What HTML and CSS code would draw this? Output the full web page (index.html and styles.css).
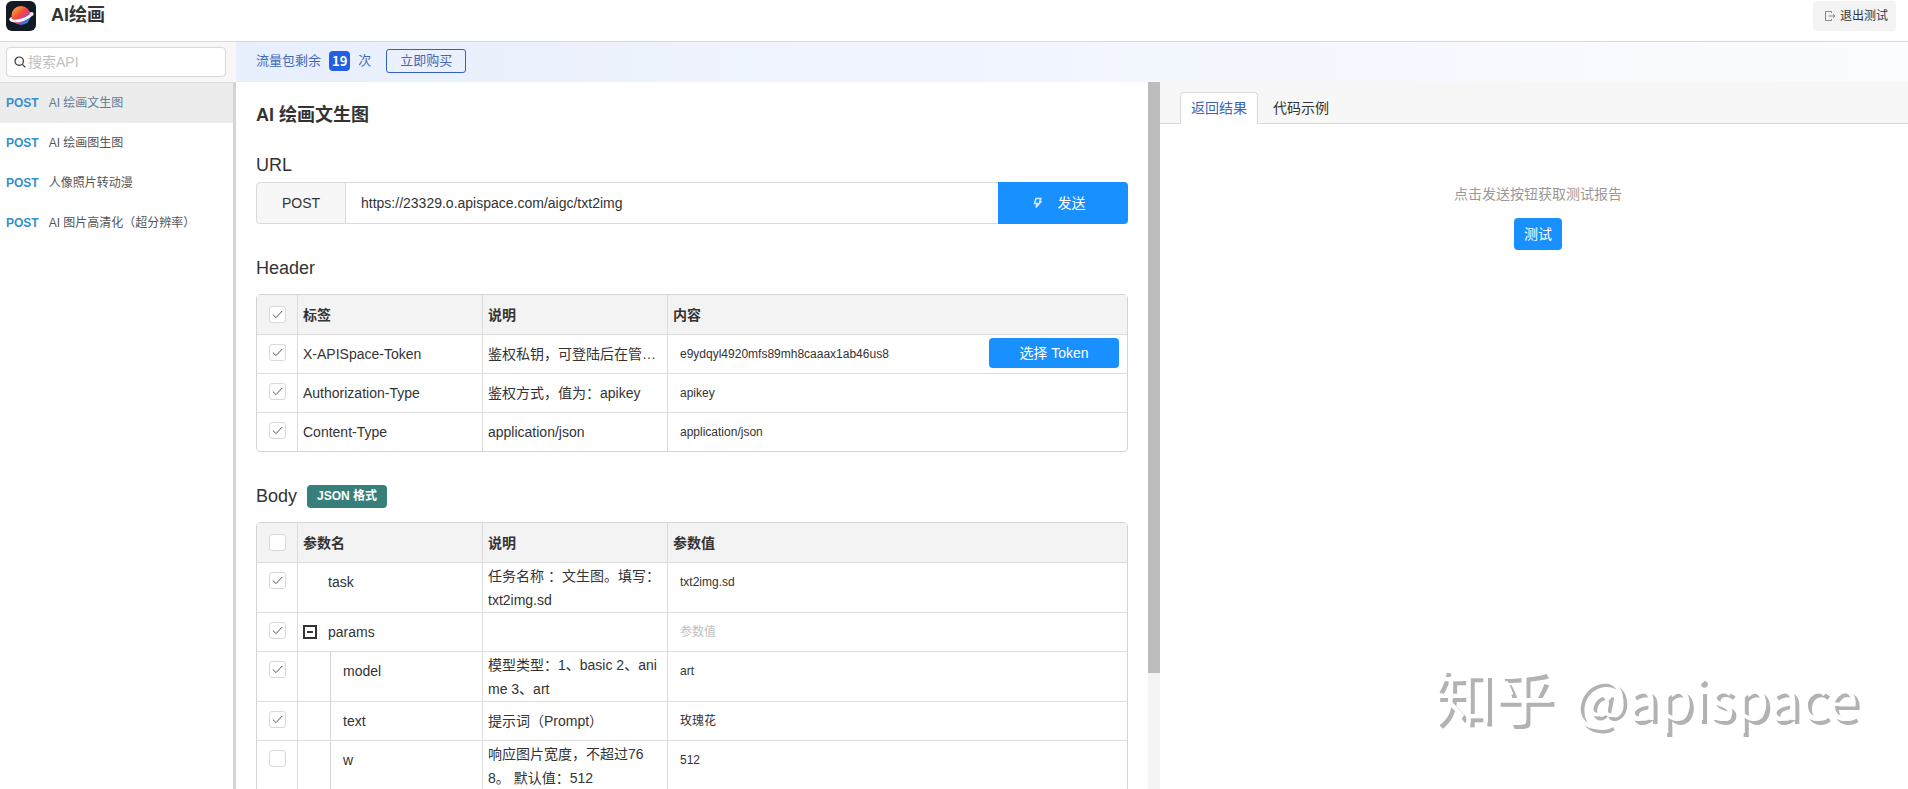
FILE: index.html
```html
<!DOCTYPE html>
<html lang="zh-CN">
<head>
<meta charset="utf-8">
<title>AI绘画</title>
<link rel="stylesheet" href="styles.css">
</head>
<body>
<header class="topbar">
  <svg class="logo" viewBox="0 0 30 30" aria-hidden="true">
    <defs>
      <linearGradient id="planet" x1="0.1" y1="0.2" x2="0.8" y2="1">
        <stop offset="0" stop-color="#ff9a2e"/>
        <stop offset="0.4" stop-color="#f2453f"/>
        <stop offset="0.62" stop-color="#c94a9a"/>
        <stop offset="0.85" stop-color="#3a6fe0"/>
        <stop offset="1" stop-color="#2fb4d8"/>
      </linearGradient>
    </defs>
    <rect width="30" height="30" rx="6" fill="#121a26"/>
    <circle cx="15" cy="14.5" r="9.5" fill="url(#planet)"/>
    <path d="M24.5 12.5C28 11 27.500 14 24.500 16.200C19 20.500 10 22.800 4.800 20.400C2.400 19 3 16.400 6 16C5 18 6.500 18.800 9 18.600C15 18.400 22 15.600 24.500 12.500Z" fill="#fff"/>
    <circle cx="25.600" cy="13" r="2" fill="#ffe3e8"/>
  </svg>
  <h1 class="app-name">AI绘画</h1>
  <button class="exit" type="button">
    <svg width="12" height="12" viewBox="0 0 12 12" fill="none" stroke="#888" aria-hidden="true"><path d="M7.500 3V1.500H1.500V10.500H7.500V9M4.500 6H11M9 4.200L11 6L9 7.800"/></svg>
    退出测试
  </button>
</header>
<div class="shell">
  <aside class="sidebar">
    <div class="search-row">
      <label class="search">
        <svg width="12" height="12" viewBox="0 0 12 12" fill="none" stroke="#333" stroke-width="1.200" aria-hidden="true"><circle cx="5.200" cy="5.200" r="4.200"/><path d="M8.300 8.300L11.300 11.300"/></svg>
        <input type="text" placeholder="搜索API" aria-label="搜索API">
      </label>
    </div>
    <nav class="api-list">
      <a class="api active" href="#"><span class="verb">POST</span>AI 绘画文生图</a>
      <a class="api" href="#"><span class="verb">POST</span>AI 绘画图生图</a>
      <a class="api" href="#"><span class="verb">POST</span>人像照片转动漫</a>
      <a class="api" href="#"><span class="verb">POST</span>AI 图片高清化（超分辨率）</a>
    </nav>
  </aside>
  <div class="workspace">
    <div class="quota">
      <span>流量包剩余</span><b class="count">19</b><span>次</span>
      <button class="buy" type="button">立即购买</button>
    </div>
    <div class="panes">
      <main class="request">
        <h2 class="title">AI 绘画文生图</h2>
        <h3 class="section">URL</h3>
        <div class="url-row">
          <span class="method">POST</span>
          <input class="url" type="text" value="https://23329.o.apispace.com/aigc/txt2img" aria-label="URL">
          <button class="send" type="button">
            <svg width="9" height="12" viewBox="0 0 9 12" fill="none" stroke="#d6eaff" stroke-width="1.500" aria-hidden="true"><path d="M3 1.500H7.800L6.700 4.800H7.800L3 10.500L4.200 6.500H1.500Z"/></svg>
            发送
          </button>
        </div>
        <h3 class="section spaced">Header</h3>
        <table class="grid">
          <colgroup><col class="c-check"><col class="c-name"><col class="c-desc"><col></colgroup>
          <thead><tr><th><input type="checkbox" checked aria-label="全选"></th><th>标签</th><th>说明</th><th>内容</th></tr></thead>
          <tbody>
            <tr><td><input type="checkbox" checked aria-label="X-APISpace-Token"></td><td>X-APISpace-Token</td><td>鉴权私钥，可登陆后在管…</td><td class="val"><div class="token-cell"><input type="text" value="e9ydqyl4920mfs89mh8caaax1ab46us8" aria-label="Token"><button class="token" type="button">选择 Token</button></div></td></tr>
            <tr><td><input type="checkbox" checked aria-label="Authorization-Type"></td><td>Authorization-Type</td><td>鉴权方式，值为：apikey</td><td class="val"><input type="text" value="apikey" aria-label="Authorization-Type 内容"></td></tr>
            <tr><td><input type="checkbox" checked aria-label="Content-Type"></td><td>Content-Type</td><td>application/json</td><td class="val"><input type="text" value="application/json" aria-label="Content-Type 内容"></td></tr>
          </tbody>
        </table>
        <h3 class="section spaced">Body <span class="format">JSON 格式</span></h3>
        <table class="grid">
          <colgroup><col class="c-check"><col class="c-name"><col class="c-desc"><col></colgroup>
          <thead><tr><th><input type="checkbox" aria-label="全选"></th><th>参数名</th><th>说明</th><th>参数值</th></tr></thead>
          <tbody>
            <tr class="tall"><td><input type="checkbox" checked aria-label="task"></td><td><div class="node">task</div></td><td>任务名称 ：文生图。填写：txt2img.sd</td><td class="val"><input type="text" value="txt2img.sd" aria-label="task 参数值"></td></tr>
            <tr><td><input type="checkbox" checked aria-label="params"></td><td><div class="node"><button class="fold" type="button" aria-label="收起"></button>params</div></td><td></td><td class="val"><input type="text" placeholder="参数值" aria-label="params 参数值"></td></tr>
            <tr class="tall"><td><input type="checkbox" checked aria-label="model"></td><td class="child"><div class="leaf">model</div></td><td>模型类型：1、basic 2、anime 3、art</td><td class="val"><input type="text" value="art" aria-label="model 参数值"></td></tr>
            <tr><td><input type="checkbox" checked aria-label="text"></td><td class="child"><div class="leaf">text</div></td><td>提示词（Prompt）</td><td class="val"><input type="text" value="玫瑰花" aria-label="text 参数值"></td></tr>
            <tr class="tall"><td><input type="checkbox" aria-label="w"></td><td class="child"><div class="leaf">w</div></td><td>响应图片宽度，不超过768。 默认值：512</td><td class="val"><input type="text" value="512" aria-label="w 参数值"></td></tr>
          </tbody>
        </table>
      </main>
      <div class="track"><div class="thumb"></div></div>
      <section class="response">
        <div class="tabs" role="tablist">
          <button class="tab on" type="button" role="tab" aria-selected="true">返回结果</button>
          <button class="tab" type="button" role="tab" aria-selected="false">代码示例</button>
        </div>
        <div class="empty">
          <p class="hint">点击发送按钮获取测试报告</p>
          <button class="test" type="button">测试</button>
        </div>
      </section>
    </div>
  </div>
</div>
<div class="watermark"><span class="site">知乎</span><span>@apispace</span></div>
</body>
</html>
```

FILE: styles.css
```css
* { box-sizing: border-box; }
body {
  margin: 0;
  height: 100vh;
  display: flex;
  flex-direction: column;
  overflow: hidden;
  position: relative;
  background: #fff;
  color: #333;
  font: 14px/24px "Liberation Sans", "Noto Sans CJK SC", sans-serif;
}
button, input { font: inherit; color: inherit; margin: 0; }
button { border: 0; padding: 0; cursor: pointer; }
h1, h2, h3, p { margin: 0; }

.topbar {
  flex: none;
  display: flex;
  align-items: flex-start;
  height: 42px;
  padding: 1px 12px 0 6px;
  border-bottom: 1px solid #d9d9d9;
}
.logo { width: 30px; height: 30px; }
.app-name { margin-left: 15px; font-size: 18px; line-height: 28px; font-weight: 700; }
.exit {
  margin-left: auto;
  display: flex;
  align-items: center;
  gap: 4px;
  height: 30px;
  padding: 0 8px 0 11px;
  border-radius: 4px;
  background: #f3f3f3;
  font-size: 12px;
}

.shell { flex: 1; min-height: 0; display: flex; }
.sidebar { flex: none; width: 236px; display: flex; flex-direction: column; }
.search-row { padding: 5px 10px 5px 6px; background: #f7f7f7; border-bottom: 1px solid #d9d9d9; }
.search {
  display: flex;
  align-items: center;
  gap: 2px;
  height: 30px;
  padding: 0 7px;
  border: 1px solid #d9d9d9;
  border-radius: 4px;
  background: #fff;
}
.search svg { flex: none; }
.search input { flex: 1; min-width: 0; border: 0; padding: 0; outline: 0; background: none; }
::placeholder { color: #bfbfbf; opacity: 1; }
.api-list { flex: 1; border-right: 3px solid #d4d4d4; }
.api {
  display: flex;
  align-items: center;
  gap: 10px;
  height: 40px;
  padding-left: 6px;
  color: #555;
  font-size: 12px;
  text-decoration: none;
}
.api.active { background: #ececec; color: #5f7d95; }
.verb { color: #3490d0; font-weight: 700; }

.workspace { flex: 1; min-width: 0; display: flex; flex-direction: column; }
.quota {
  flex: none;
  display: flex;
  align-items: center;
  gap: 8px;
  height: 40px;
  padding: 0 20px 2px;
  background: linear-gradient(90deg, #e8effc, #fbfcff);
  color: #4468b8;
  font-size: 13px;
}
.count {
  height: 20px;
  padding: 0 3px;
  border-radius: 4px;
  background: #235fe3;
  color: #fff;
  font: 700 13px/20px "Noto Sans CJK SC", sans-serif;
}
.buy {
  width: 80px;
  height: 24px;
  margin-left: 7px;
  border: 1px solid #3560bd;
  border-radius: 3px;
  background: none;
  line-height: 22px;
}
.panes {
  flex: 1;
  min-height: 0;
  display: grid;
  grid-template-columns: minmax(0, 912fr) 12px minmax(0, 748fr);
  grid-template-rows: minmax(0, 1fr);
}

.request { padding: 20px; overflow: hidden; }
.title { font-size: 18px; line-height: 26px; font-weight: 700; }
.section {
  display: flex;
  align-items: center;
  gap: 10px;
  margin: 24px 0 4px;
  font-size: 18px;
  line-height: 26px;
  font-weight: 400;
}
.section.spaced { margin: 31px 0 13px; }
.url-row { display: flex; height: 42px; }
.method {
  width: 90px;
  border: 1px solid #d9d9d9;
  border-radius: 4px 0 0 4px;
  background: #f7f7f7;
  text-align: center;
  line-height: 40px;
}
.url {
  flex: 1;
  min-width: 0;
  padding: 0 15px;
  border: 1px solid #d9d9d9;
  border-width: 1px 0;
  outline: 0;
}
.send {
  width: 130px;
  display: flex;
  align-items: center;
  justify-content: center;
  gap: 16px;
  padding-right: 8px;
  border-radius: 0 4px 4px 0;
  background: #1890ff;
  color: #fff;
}
.format {
  height: 23px;
  padding: 0 10px;
  border-radius: 4px;
  background: #367f7b;
  color: #fff;
  font-size: 12px;
  line-height: 23px;
  font-weight: 700;
}

.grid {
  width: 100%;
  table-layout: fixed;
  border: 1px solid #d4d4d4;
  border-radius: 4px;
  border-collapse: separate;
  border-spacing: 0;
}
.c-check { width: 41px; }
.c-name, .c-desc { width: 185px; }
.grid th, .grid td {
  height: 39px;
  padding: 0 5px;
  border: 0 solid #dcdcdc;
  border-width: 0 1px 1px 0;
  text-align: left;
  word-break: break-all;
}
.grid th { height: 40px; background: #f3f3f3; }
.grid th:last-child, .grid td:last-child { border-right: 0; }
.grid tbody tr:last-child td { height: 38px; border-bottom: 0; }
.grid .tall td, .grid tbody .tall:last-child td { height: 50px; }
.grid th:first-child, .grid td:first-child { padding: 0; text-align: center; }
.grid td:first-child { vertical-align: top; padding-top: 9px; }
.grid td.val { padding: 7px 8px 0 12px; vertical-align: top; font-size: 12px; }
.val input { width: 100%; height: 24px; padding: 0; border: 0; outline: 0; background: none; }
.token-cell { display: flex; gap: 12px; margin-top: -4px; }
.token-cell input { flex: 1; min-width: 0; height: 32px; }
.token {
  flex: none;
  width: 130px;
  height: 30px;
  border-radius: 4px;
  background: #1890ff;
  color: #fff;
  font-size: 14px;
}
input[type="checkbox"] {
  appearance: none;
  display: block;
  width: 17px;
  height: 17px;
  margin: 0 auto;
  border: 1px solid #d9d9d9;
  border-radius: 3px;
  background: #fff center / 11px 9px no-repeat;
}
input[type="checkbox"]:checked {
  background-image: url("data:image/svg+xml,%3Csvg xmlns='http://www.w3.org/2000/svg' viewBox='0 0 11 9'%3E%3Cpath d='M.8 4.500L4 7.600L10.200 1' fill='none' stroke='%23555'/%3E%3C/svg%3E");
}
.node { display: flex; align-items: center; padding-left: 25px; }
.fold {
  width: 14px;
  height: 14px;
  margin: 0 11px 0 -25px;
  border: 2px solid #333;
  background: linear-gradient(#333, #333) center / 6px 2px no-repeat;
}
.grid td.child { padding-left: 32px; }
.leaf {
  display: flex;
  align-items: center;
  height: 38px;
  padding-left: 12px;
  border-left: 1px solid #d4d4d4;
}
.tall .leaf { height: 49px; padding-bottom: 12px; }
.tall .node { padding-bottom: 12px; }

.track { background: #f4f4f4; }
.thumb { height: 83.6%; background: #bcbcbc; }

.tabs {
  display: flex;
  align-items: flex-end;
  height: 42px;
  padding-left: 20px;
  background: #f7f7f7;
  box-shadow: inset 0 -1px #d9d9d9;
}
.tab {
  height: 32px;
  padding: 0 10px 2px;
  border: 1px solid transparent;
  border-bottom: 0;
  border-radius: 4px 4px 0 0;
  background: none;
}
.tab + .tab { margin-left: 4px; }
.tab.on { border-color: #d9d9d9; background: #fff; color: #3c66b5; }
.empty { display: flex; flex-direction: column; align-items: center; gap: 12px; padding: 58px 0 0 8px; }
.hint { color: #999; }
.test { width: 48px; height: 32px; border-radius: 4px; background: #1890ff; color: #fff; }

.watermark {
  position: absolute;
  right: 50px;
  bottom: 53px;
  display: flex;
  align-items: baseline;
  gap: 20px;
  color: #fff;
  font: 56px/80px "Noto Sans CJK SC", sans-serif;
  text-shadow: 4px 4px #b2b2b2;
  pointer-events: none;
}
.site { font-size: 60px; }
```
